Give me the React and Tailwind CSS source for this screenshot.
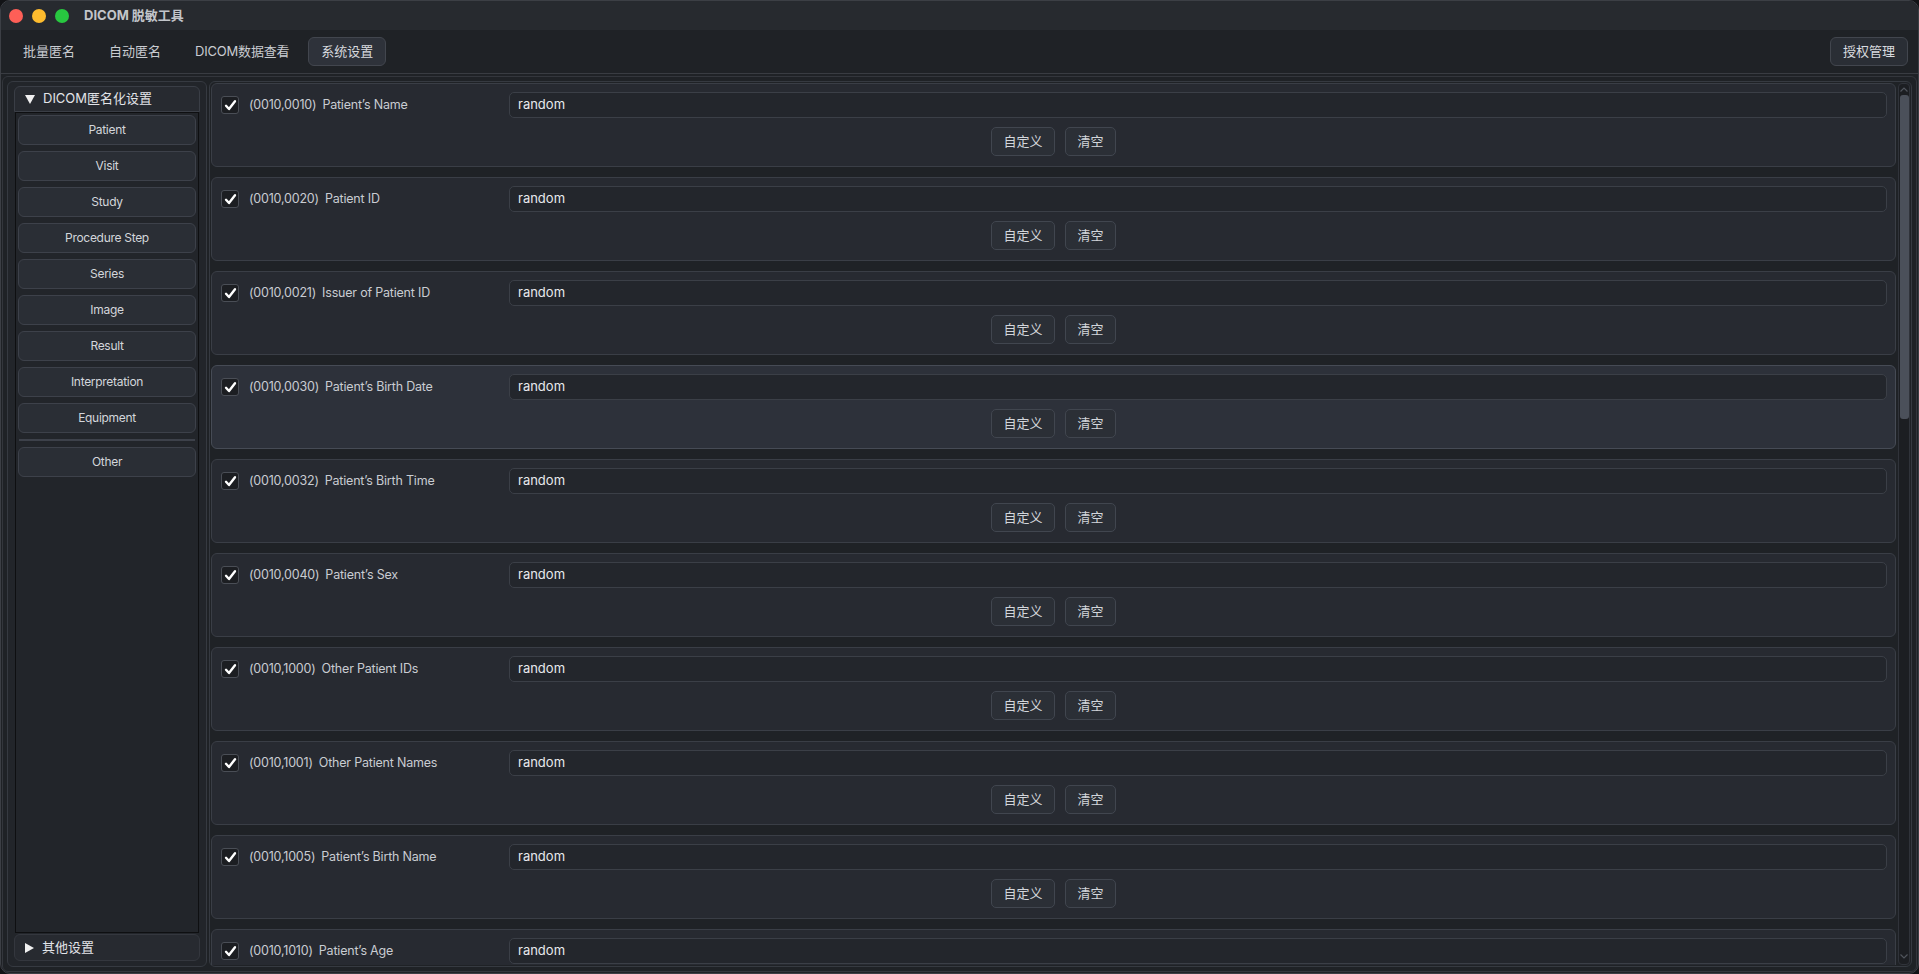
import React from "react";

const FONT = { fontFamily: '"Inter", "Noto Sans CJK SC", "Liberation Sans", sans-serif' };

const TAGS = [
  ["(0010,0010)", "Patient’s Name"],
  ["(0010,0020)", "Patient ID"],
  ["(0010,0021)", "Issuer of Patient ID"],
  ["(0010,0030)", "Patient’s Birth Date"],
  ["(0010,0032)", "Patient’s Birth Time"],
  ["(0010,0040)", "Patient’s Sex"],
  ["(0010,1000)", "Other Patient IDs"],
  ["(0010,1001)", "Other Patient Names"],
  ["(0010,1005)", "Patient’s Birth Name"],
  ["(0010,1010)", "Patient’s Age"],
  ["(0010,1020)", "Patient’s Size"],
];

const GROUPS = [
  "Patient",
  "Visit",
  "Study",
  "Procedure Step",
  "Series",
  "Image",
  "Result",
  "Interpretation",
  "Equipment",
];

function CheckBox() {
  return (
    <div className="w-[18px] h-[18px] shrink-0 rounded-[3px] border border-[#4a4e56] bg-[#1c1e22] flex items-center justify-center">
      <svg width="13" height="13" viewBox="0 0 13 13">
        <path d="M2 6.8 L5 10 L11 2.2" fill="none" stroke="#ffffff" strokeWidth="2.4" strokeLinecap="round" strokeLinejoin="round" />
      </svg>
    </div>
  );
}

function SmallButton({ children, w }) {
  return (
    <button className={`h-[29px] ${w} rounded-[5px] border border-[#41464f] bg-[#2b2f36] text-[13px] text-[#d3d6db]`}>
      {children}
    </button>
  );
}

function TagCard({ code, name, active }) {
  return (
    <div
      className={`h-[84px] shrink-0 rounded-[6px] border flex flex-col pt-[8px] pl-[9px] pr-[8px] ${
        active ? "border-[#464b55] bg-[#2d313a]" : "border-[#3a3e46] bg-[#272a31]"
      }`}
    >
      <div className="flex items-center h-[26px]">
        <div className="w-[288px] flex items-center gap-[10px] shrink-0">
          <CheckBox />
          <div className="flex items-center gap-[6px] text-[12.5px] text-[#c9ccd2] tracking-[-0.2px]">
            <span>{code}</span>
            <span>{name}</span>
          </div>
        </div>
        <div className="flex-1 h-[26px] rounded-[5px] border border-[#3b3f47] bg-[#23262c] flex items-center px-[8px] text-[13px] text-[#e8e9ec]">
          random
        </div>
      </div>
      <div className="flex justify-center gap-[10px] mt-[9px] pr-[1px]">
        <SmallButton w="w-[64px]">自定义</SmallButton>
        <SmallButton w="w-[51px]">清空</SmallButton>
      </div>
    </div>
  );
}

export default function App() {
  return (
    <div className="w-[1919px] h-[974px] bg-[#121316] overflow-hidden" style={FONT}>
      <div className="w-full h-full rounded-[10px] border border-[#3c3f45] bg-[#1f2226] flex flex-col overflow-hidden">
        {/* title bar */}
        <div className="h-[29px] shrink-0 bg-[#272a2f] flex items-center pl-[8px]">
          <div className="flex items-center gap-[9px]">
            <span className="w-[14px] h-[14px] rounded-full bg-[#fe5f57]" />
            <span className="w-[14px] h-[14px] rounded-full bg-[#febc2e]" />
            <span className="w-[14px] h-[14px] rounded-full bg-[#28c840]" />
          </div>
          <span className="ml-[15px] text-[13px] font-bold text-[#c2c5ca]">DICOM 脱敏工具</span>
        </div>

        {/* tab bar */}
        <div className="h-[44px] shrink-0 flex items-center pl-[5px] pr-[10px] border-b border-[#393c42]">
          <div className="px-[17px] text-[13px] text-[#c9ccd1]">批量匿名</div>
          <div className="px-[17px] text-[13px] text-[#c9ccd1]">自动匿名</div>
          <div className="px-[17px] text-[13px] text-[#c9ccd1] tracking-[-0.2px]">DICOM数据查看</div>
          <div className="ml-[2px] h-[29px] px-[12px] flex items-center rounded-[6px] border border-[#42464e] bg-[#2e323a] text-[13px] text-[#d8dadf]">
            系统设置
          </div>
          <div className="ml-auto h-[29px] px-[12px] flex items-center rounded-[6px] border border-[#42464e] bg-[#2a2e35] text-[13px] text-[#d8dadf]">
            授权管理
          </div>
        </div>

        {/* body */}
        <div className="flex-1 min-h-0 pt-[2px] px-[1px] pb-[1px]">
          <div className="h-full rounded-[6px] border border-[#33363c] p-[4px] flex gap-[2px]">
            {/* left navigation */}
            <div className="w-[200px] shrink-0 rounded-[6px] border border-[#363a41] bg-[#22252a] flex flex-col px-[6px] pt-[4px] pb-[5px]">
              <div className="h-[26px] shrink-0 rounded-t-[6px] border border-[#3a3e46] bg-[#272a30] flex items-center pl-[10px] gap-[8px] text-[13px] text-[#e2e4e8]">
                <svg width="10" height="9" viewBox="0 0 10 9">
                  <path d="M0 0 H10 L5 9 Z" fill="#f0f0f0" />
                </svg>
                <span>DICOM匿名化设置</span>
              </div>
              <div className="flex-1 min-h-0 mx-[1px] border border-[#0e0f11] bg-[#22252a] px-[2px] pt-[2px] flex flex-col gap-[6px]">
                {GROUPS.map((g) => (
                  <div
                    key={g}
                    className="h-[30px] shrink-0 rounded-[6px] border border-[#3d414a] bg-[#2a2e35] flex items-center justify-center text-[12px] tracking-[-0.3px] text-[#d3d6db]"
                  >
                    {g}
                  </div>
                ))}
                <div className="h-[2px] shrink-0 bg-[#3d414a] mx-[1px]" />
                <div className="h-[30px] shrink-0 rounded-[6px] border border-[#3d414a] bg-[#2a2e35] flex items-center justify-center text-[12px] tracking-[-0.3px] text-[#d3d6db]">
                  Other
                </div>
              </div>
              <div className="h-[27px] mt-[1px] shrink-0 rounded-[6px] border border-[#34373e] bg-[#272a30] flex items-center pl-[10px] gap-[8px] text-[13px] text-[#e2e4e8]">
                <svg width="9" height="10" viewBox="0 0 9 10">
                  <path d="M0 0 V10 L9 5 Z" fill="#f0f0f0" />
                </svg>
                <span>其他设置</span>
              </div>
            </div>

            {/* tag list */}
            <div className="flex-1 min-w-0 rounded-[6px] border border-[#363a41] bg-[#1f2226] flex pt-[1px] pl-[1px] pr-[1px] pb-[1px]">
              <div className="flex-1 min-w-0 flex flex-col gap-[10px] overflow-hidden">
                {TAGS.map(([c, n], i) => (
                  <TagCard key={c} code={c} name={n} active={i === 3} />
                ))}
              </div>
              <div className="w-[12px] ml-[2px] shrink-0 rounded-[4px] border border-[#30333a] bg-[#1c1e22] flex flex-col items-center">
                <svg width="10" height="8" viewBox="0 0 10 8" className="mt-[2px]">
                  <path d="M1.5 5.5 L5 2 L8.5 5.5" fill="none" stroke="#50545c" strokeWidth="1.2" />
                </svg>
                <div className="w-[9px] h-[324px] mt-[1px] rounded-[3px] bg-[#4b505a]" />
                <div className="flex-1" />
                <svg width="10" height="8" viewBox="0 0 10 8" className="mb-[4px]">
                  <path d="M1.5 2.5 L5 6 L8.5 2.5" fill="none" stroke="#50545c" strokeWidth="1.2" />
                </svg>
              </div>
            </div>
          </div>
        </div>
      </div>
    </div>
  );
}
